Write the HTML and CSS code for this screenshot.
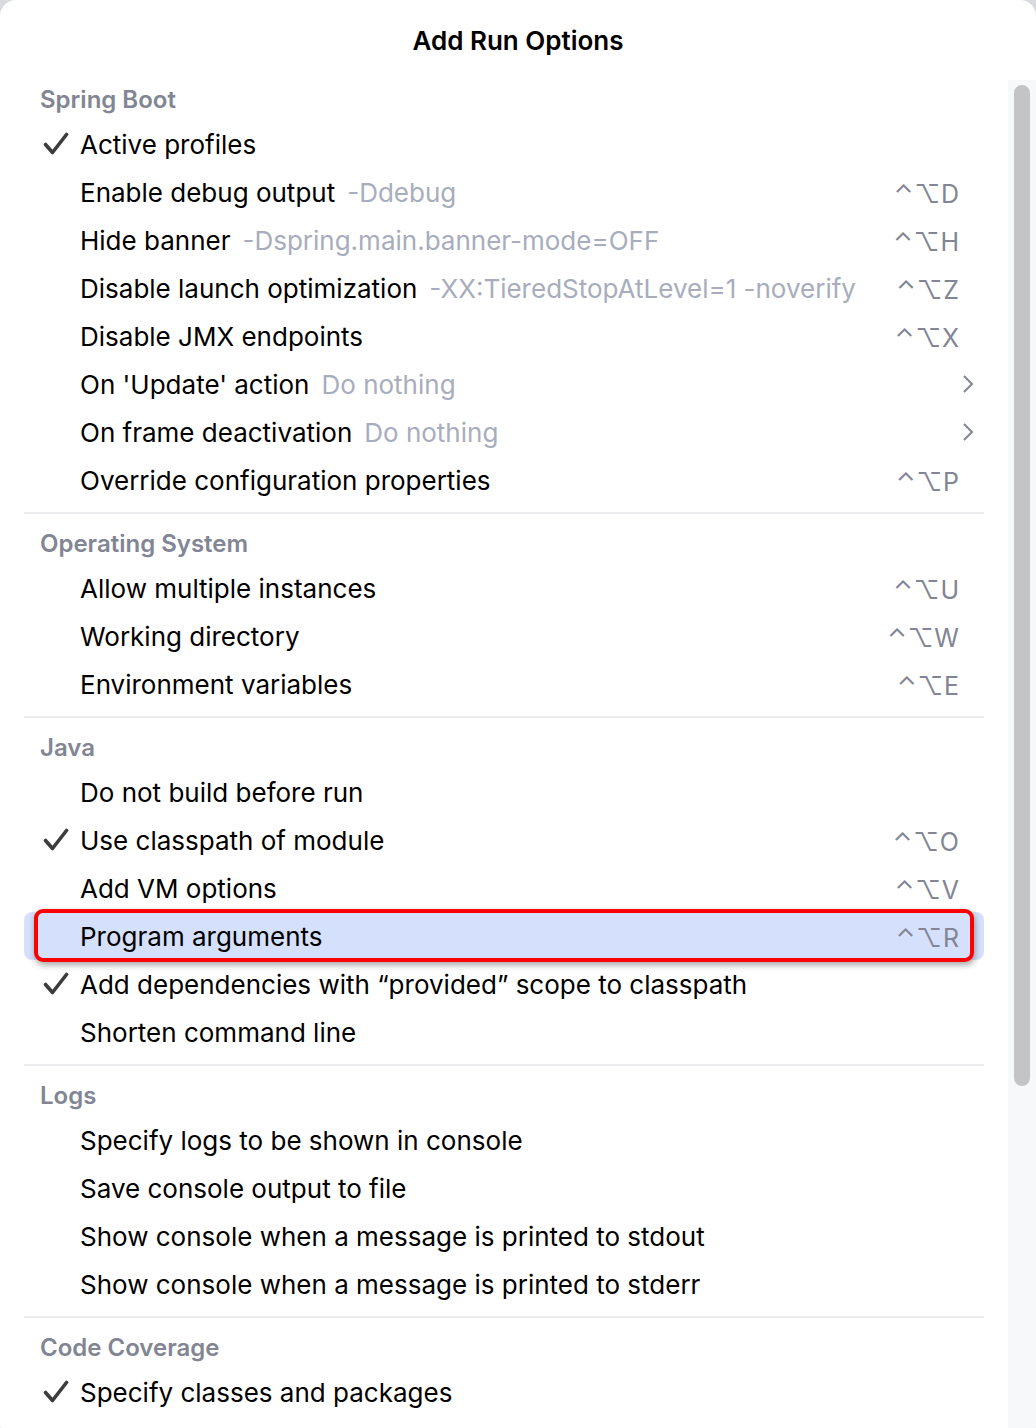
FILE: index.html
```html
<!DOCTYPE html>
<html>
<head>
<meta charset="utf-8">
<link rel="stylesheet" href="styles.css">
</head>
<body>
<div class="popup">
  <div class="title">Add Run Options</div>
  <div class="body">
    <div class="list">
      <div class="section">
        <div class="header">Spring Boot</div>
        <div class="row"><svg class="check" width="26" height="24" viewBox="0 0 26 24"><path d="M2.5 12.5l7 8L23.5 2.5" fill="none" stroke="#3c3c3c" stroke-width="3.6" stroke-linecap="round" stroke-linejoin="round"/></svg><span class="label">Active profiles</span></div>
        <div class="row"><span class="label">Enable debug output</span><span class="hint">-Ddebug</span><span class="sc">⌃⌥D</span></div>
        <div class="row"><span class="label">Hide banner</span><span class="hint">-Dspring.main.banner-mode=OFF</span><span class="sc">⌃⌥H</span></div>
        <div class="row"><span class="label">Disable launch optimization</span><span class="hint">-XX:TieredStopAtLevel=1 -noverify</span><span class="sc">⌃⌥Z</span></div>
        <div class="row"><span class="label">Disable JMX endpoints</span><span class="sc">⌃⌥X</span></div>
        <div class="row"><span class="label">On 'Update' action</span><span class="hint">Do nothing</span><span class="chev"><svg width="12" height="20" viewBox="0 0 12 20"><path d="M2 2l8 8-8 8" fill="none" stroke="#818594" stroke-width="2"/></svg></span></div>
        <div class="row"><span class="label">On frame deactivation</span><span class="hint">Do nothing</span><span class="chev"><svg width="12" height="20" viewBox="0 0 12 20"><path d="M2 2l8 8-8 8" fill="none" stroke="#818594" stroke-width="2"/></svg></span></div>
        <div class="row"><span class="label">Override configuration properties</span><span class="sc">⌃⌥P</span></div>
      </div>
      <div class="sep"></div>
      <div class="section">
        <div class="header">Operating System</div>
        <div class="row"><span class="label">Allow multiple instances</span><span class="sc">⌃⌥U</span></div>
        <div class="row"><span class="label">Working directory</span><span class="sc">⌃⌥W</span></div>
        <div class="row"><span class="label">Environment variables</span><span class="sc">⌃⌥E</span></div>
      </div>
      <div class="sep"></div>
      <div class="section">
        <div class="header">Java</div>
        <div class="row"><span class="label">Do not build before run</span></div>
        <div class="row"><svg class="check" width="26" height="24" viewBox="0 0 26 24"><path d="M2.5 12.5l7 8L23.5 2.5" fill="none" stroke="#3c3c3c" stroke-width="3.6" stroke-linecap="round" stroke-linejoin="round"/></svg><span class="label">Use classpath of module</span><span class="sc">⌃⌥O</span></div>
        <div class="row"><span class="label">Add VM options</span><span class="sc">⌃⌥V</span></div>
        <div class="row selected"><span class="label">Program arguments</span><span class="sc">⌃⌥R</span><span class="mark"></span></div>
        <div class="row"><svg class="check" width="26" height="24" viewBox="0 0 26 24"><path d="M2.5 12.5l7 8L23.5 2.5" fill="none" stroke="#3c3c3c" stroke-width="3.6" stroke-linecap="round" stroke-linejoin="round"/></svg><span class="label">Add dependencies with “provided” scope to classpath</span></div>
        <div class="row"><span class="label">Shorten command line</span></div>
      </div>
      <div class="sep"></div>
      <div class="section">
        <div class="header">Logs</div>
        <div class="row"><span class="label">Specify logs to be shown in console</span></div>
        <div class="row"><span class="label">Save console output to file</span></div>
        <div class="row"><span class="label">Show console when a message is printed to stdout</span></div>
        <div class="row"><span class="label">Show console when a message is printed to stderr</span></div>
      </div>
      <div class="sep"></div>
      <div class="section">
        <div class="header">Code Coverage</div>
        <div class="row"><svg class="check" width="26" height="24" viewBox="0 0 26 24"><path d="M2.5 12.5l7 8L23.5 2.5" fill="none" stroke="#3c3c3c" stroke-width="3.6" stroke-linecap="round" stroke-linejoin="round"/></svg><span class="label">Specify classes and packages</span></div>
      </div>
    </div>
    <div class="scroll"><div class="thumb"></div></div>
  </div>
</div>
</body>
</html>
```
FILE: styles.css
```css
html, body {
  margin: 0;
  padding: 0;
  background: #d9dadd;
}
body {
  width: 1036px;
  height: 1428px;
  overflow: hidden;
  font-family: Inter, "Noto Sans", sans-serif;
}
.popup {
  width: 1036px;
  height: 1440px;
  background: #ffffff;
  border-radius: 16px;
  overflow: hidden;
}
.title {
  height: 78px;
  box-sizing: border-box;
  padding-top: 24px;
  text-align: center;
  font-size: 26px;
  font-weight: 600;
  line-height: 34px;
  color: #000;
}
.body {
  display: flex;
}
.list {
  flex: 1;
  padding: 0 24px;
}
.header {
  height: 42px;
  display: flex;
  align-items: center;
  padding-left: 16px;
  font-size: 24px;
  font-weight: 600;
  color: #818594;
}
.row {
  position: relative;
  height: 48px;
  display: flex;
  align-items: center;
  padding-left: 56px;
  padding-right: 24px;
  font-size: 26px;
  color: #000;
}
.check {
  position: absolute;
  left: 19px;
  top: 12px;
}
.hint {
  margin-left: 12px;
  color: #a8adbd;
}
.sc {
  margin-left: auto;
  padding-top: 3px;
  color: #818594;
  font-size: 25px;
  letter-spacing: 1px;
}
.chev {
  margin-left: auto;
  margin-right: -14px;
  display: flex;
}
.sep {
  height: 2px;
  background: #ebecf0;
  margin: 8px 0;
}
.selected {
  background: #d5e1fc;
  border-radius: 8px;
}
.mark {
  position: absolute;
  left: 10px;
  right: 10px;
  top: -3px;
  bottom: -2px;
  border: 4px solid #ff0000;
  border-radius: 9px;
  box-shadow: 1px 3px 6px rgba(0,0,0,0.35);
}
.scroll {
  width: 28px;
  height: 1400px;
  background: #f7f8fa;
  margin-top: 2px;
  padding-top: 5px;
  box-sizing: border-box;
  display: flex;
  justify-content: center;
}
.thumb {
  width: 16px;
  height: 1001px;
  background: #c4c4c6;
  border-radius: 8px;
}
```
